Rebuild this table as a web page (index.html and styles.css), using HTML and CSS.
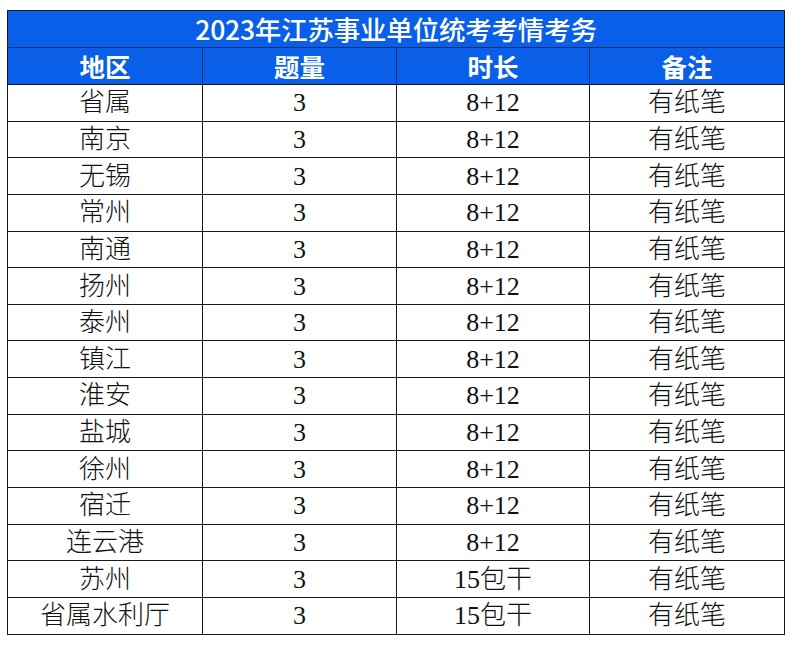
FILE: index.html
```html
<!DOCTYPE html>
<html lang="zh-CN">
<head>
<meta charset="utf-8">
<title>2023年江苏事业单位统考考情考务</title>
<link rel="stylesheet" href="styles.css">
</head>
<body>
<table class="exam">
  <colgroup>
    <col class="c1"><col class="c2"><col class="c3"><col class="c4">
  </colgroup>
  <thead>
    <tr class="title"><th colspan="4">2023年江苏事业单位统考考情考务</th></tr>
    <tr class="head"><th>地区</th><th>题量</th><th>时长</th><th>备注</th></tr>
  </thead>
  <tbody>
    <tr><td>省属</td><td>3</td><td>8+12</td><td>有纸笔</td></tr>
    <tr><td>南京</td><td>3</td><td>8+12</td><td>有纸笔</td></tr>
    <tr><td>无锡</td><td>3</td><td>8+12</td><td>有纸笔</td></tr>
    <tr><td>常州</td><td>3</td><td>8+12</td><td>有纸笔</td></tr>
    <tr><td>南通</td><td>3</td><td>8+12</td><td>有纸笔</td></tr>
    <tr><td>扬州</td><td>3</td><td>8+12</td><td>有纸笔</td></tr>
    <tr><td>泰州</td><td>3</td><td>8+12</td><td>有纸笔</td></tr>
    <tr><td>镇江</td><td>3</td><td>8+12</td><td>有纸笔</td></tr>
    <tr><td>淮安</td><td>3</td><td>8+12</td><td>有纸笔</td></tr>
    <tr><td>盐城</td><td>3</td><td>8+12</td><td>有纸笔</td></tr>
    <tr><td>徐州</td><td>3</td><td>8+12</td><td>有纸笔</td></tr>
    <tr><td>宿迁</td><td>3</td><td>8+12</td><td>有纸笔</td></tr>
    <tr><td>连云港</td><td>3</td><td>8+12</td><td>有纸笔</td></tr>
    <tr><td>苏州</td><td>3</td><td>15包干</td><td>有纸笔</td></tr>
    <tr><td>省属水利厅</td><td>3</td><td>15包干</td><td>有纸笔</td></tr>
  </tbody>
</table>
</body>
</html>
```

FILE: styles.css
```css
html, body {
  margin: 0;
  padding: 0;
  background: #ffffff;
}

.exam {
  margin: 10px 0 0 7px;
  width: 777px;
  border-collapse: collapse;
  table-layout: fixed;
  border: 1.5px solid #1a1a1a;
}

.c1 { width: 195px; }
.c2 { width: 194px; }
.c3 { width: 193px; }
.c4 { width: 195px; }

.exam th,
.exam td {
  padding: 0;
  text-align: center;
  vertical-align: middle;
  white-space: nowrap;
  overflow: hidden;
}

.title th {
  height: 36px;
  background: #0a5fe8;
  color: #ffffff;
  font-family: "Noto Sans CJK SC", "Liberation Sans", sans-serif;
  font-weight: 500;
  font-size: 26.5px;
  line-height: 36px;
  letter-spacing: -0.2px;
  border-bottom: 1.5px solid #14306a;
}

.head th {
  height: 36px;
  background: #0a5fe8;
  color: #ffffff;
  font-family: "Noto Sans CJK SC", "Liberation Sans", sans-serif;
  font-weight: 700;
  font-size: 25.5px;
  line-height: 36px;
  border-left: 1.5px solid #14306a;
  border-bottom: 1.5px solid #111111;
}

.head th:first-child { border-left: none; }

.exam td {
  height: 35.65px;
  font-family: "Liberation Serif", "Noto Sans CJK SC", serif;
  font-weight: 300;
  font-size: 26px;
  line-height: 35px;
  color: #111111;
  border: 1.5px solid #1a1a1a;
}
```
